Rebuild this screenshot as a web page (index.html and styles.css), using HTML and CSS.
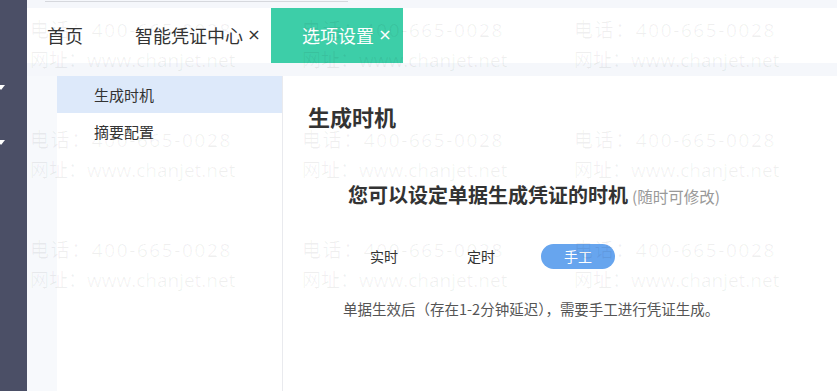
FILE: index.html
```html
<!DOCTYPE html>
<html lang="zh-CN">
<head>
<meta charset="utf-8">
<title>选项设置</title>
<link rel="stylesheet" href="styles.css">
</head>
<body>
<div class="app">
  <aside class="sidebar">
    <span class="caret"></span>
    <span class="caret caret-2"></span>
  </aside>
  <div class="main">
    <div class="topbar"><div class="search-line"></div></div>
    <nav class="tabs">
      <div class="tab tab-home">首页</div>
      <div class="tab tab-mid">智能凭证中心<span class="close">×</span></div>
      <div class="tab tab-active">选项设置<span class="close">×</span></div>
    </nav>
    <div class="strip"></div>
    <div class="body">
      <div class="gutter"></div>
      <ul class="menu">
        <li class="menu-item is-selected">生成时机</li>
        <li class="menu-item">摘要配置</li>
      </ul>
      <section class="content">
        <h1 class="title">生成时机</h1>
        <p class="intro">您可以设定单据生成凭证的时机<span class="note">(随时可修改)</span></p>
        <div class="options">
          <span class="option">实时</span>
          <span class="option">定时</span>
          <span class="option is-on">手工</span>
        </div>
        <p class="desc">单据生效后（存在1-2分钟延迟），需要手工进行凭证生成。</p>
      </section>
    </div>
  </div>
  <div class="watermark" aria-hidden="true">
    <div class="wm"><span class="wm-tel">电话：400-665-0028</span><span class="wm-web">网址：www.chanjet.net</span></div>
    <div class="wm"><span class="wm-tel">电话：400-665-0028</span><span class="wm-web">网址：www.chanjet.net</span></div>
    <div class="wm"><span class="wm-tel">电话：400-665-0028</span><span class="wm-web">网址：www.chanjet.net</span></div>
    <div class="wm"><span class="wm-tel">电话：400-665-0028</span><span class="wm-web">网址：www.chanjet.net</span></div>
    <div class="wm"><span class="wm-tel">电话：400-665-0028</span><span class="wm-web">网址：www.chanjet.net</span></div>
    <div class="wm"><span class="wm-tel">电话：400-665-0028</span><span class="wm-web">网址：www.chanjet.net</span></div>
    <div class="wm"><span class="wm-tel">电话：400-665-0028</span><span class="wm-web">网址：www.chanjet.net</span></div>
    <div class="wm"><span class="wm-tel">电话：400-665-0028</span><span class="wm-web">网址：www.chanjet.net</span></div>
    <div class="wm"><span class="wm-tel">电话：400-665-0028</span><span class="wm-web">网址：www.chanjet.net</span></div>
    <div class="wm"><span class="wm-tel">电话：400-665-0028</span><span class="wm-web">网址：www.chanjet.net</span></div>
    <div class="wm"><span class="wm-tel">电话：400-665-0028</span><span class="wm-web">网址：www.chanjet.net</span></div>
    <div class="wm"><span class="wm-tel">电话：400-665-0028</span><span class="wm-web">网址：www.chanjet.net</span></div>
  </div>
</div>
</body>
</html>
```
FILE: styles.css
```css
* { box-sizing: border-box; }
html, body { margin: 0; padding: 0; }
body {
  width: 837px;
  height: 391px;
  overflow: hidden;
  background: #fff;
  font-family: "Noto Sans CJK SC", "Noto Sans", sans-serif;
  color: #333;
}
.app {
  position: relative;
  display: flex;
  width: 837px;
  height: 391px;
  overflow: hidden;
}
.sidebar {
  width: 27px;
  flex: none;
  background: #4b4f66;
  display: flex;
  flex-direction: column;
  padding-top: 85px;
}
.caret {
  width: 0;
  height: 0;
  margin-left: -3px;
  border-left: 4px solid transparent;
  border-right: 4px solid transparent;
  border-top: 5px solid #fff;
}
.caret-2 { margin-top: 50px; }
.main {
  flex: 1;
  display: flex;
  flex-direction: column;
  min-width: 0;
}
.topbar {
  height: 8px;
  background: #f5f7fb;
  padding: 1px 0 0 18px;
}
.search-line {
  width: 303px;
  height: 1px;
  background: #d6d8dd;
}
.tabs {
  height: 55px;
  background: #fff;
  display: flex;
  align-items: stretch;
  padding-left: 20px;
}
.tab {
  display: flex;
  align-items: center;
  font-size: 18px;
  line-height: 1;
  color: #333;
  padding-bottom: 2px;
}
.tab-home { margin-right: 52px; }
.tab-mid { margin-right: 10px; }
.tab-active {
  background: #3dcea8;
  color: #fff;
  padding: 0 11px 2px 31px;
}
.close {
  display: inline-block;
  width: 14px;
  margin-left: 4px;
  font-family: "DejaVu Sans", sans-serif;
  font-size: 16px;
  text-align: center;
}
.strip {
  height: 13px;
  background: #f5f7fb;
}
.body {
  flex: 1;
  display: flex;
}
.gutter {
  width: 30px;
  flex: none;
  background: #f7f9fc;
}
.menu {
  width: 226px;
  flex: none;
  margin: 0;
  padding: 0;
  list-style: none;
  border-right: 1px solid #e9eaee;
  background: #fff;
}
.menu-item {
  height: 37px;
  line-height: 37px;
  padding-left: 37px;
  font-size: 15px;
  color: #333;
}
.menu-item.is-selected { background: #dde9fa; }
.content {
  flex: 1;
  padding: 25px 0 0 25px;
}
.title {
  margin: 0;
  font-size: 22px;
  line-height: 30px;
  font-weight: 700;
  color: #333;
}
.intro {
  margin: 50px 0 0 40px;
  font-size: 20px;
  line-height: 28px;
  font-weight: 700;
  color: #333;
}
.note {
  margin-left: 4px;
  font-size: 15.5px;
  font-weight: 400;
  color: #999;
}
.options {
  display: flex;
  gap: 23px;
  margin: 34px 0 0 39px;
}
.option {
  width: 74px;
  height: 25px;
  line-height: 25px;
  border-radius: 13px;
  text-align: center;
  font-size: 14px;
  color: #333;
}
.option.is-on {
  background: #67a5ee;
  color: #fff;
}
.desc {
  margin: 30px 0 0 35px;
  font-size: 14.5px;
  line-height: 20px;
  color: #555;
}
.watermark {
  position: absolute;
  left: 30px;
  top: 15px;
  display: grid;
  grid-template-columns: repeat(4, 272px);
  grid-auto-rows: 110px;
  pointer-events: none;
  font-family: "Open Sans", "Noto Sans CJK SC", sans-serif;
  font-size: 19px;
  line-height: 30px;
  color: rgba(0, 0, 0, 0.06);
  white-space: nowrap;
}
.wm {
  display: flex;
  flex-direction: column;
}
.wm-tel { letter-spacing: 1.6px; }
.wm-web { letter-spacing: 0; }
```
